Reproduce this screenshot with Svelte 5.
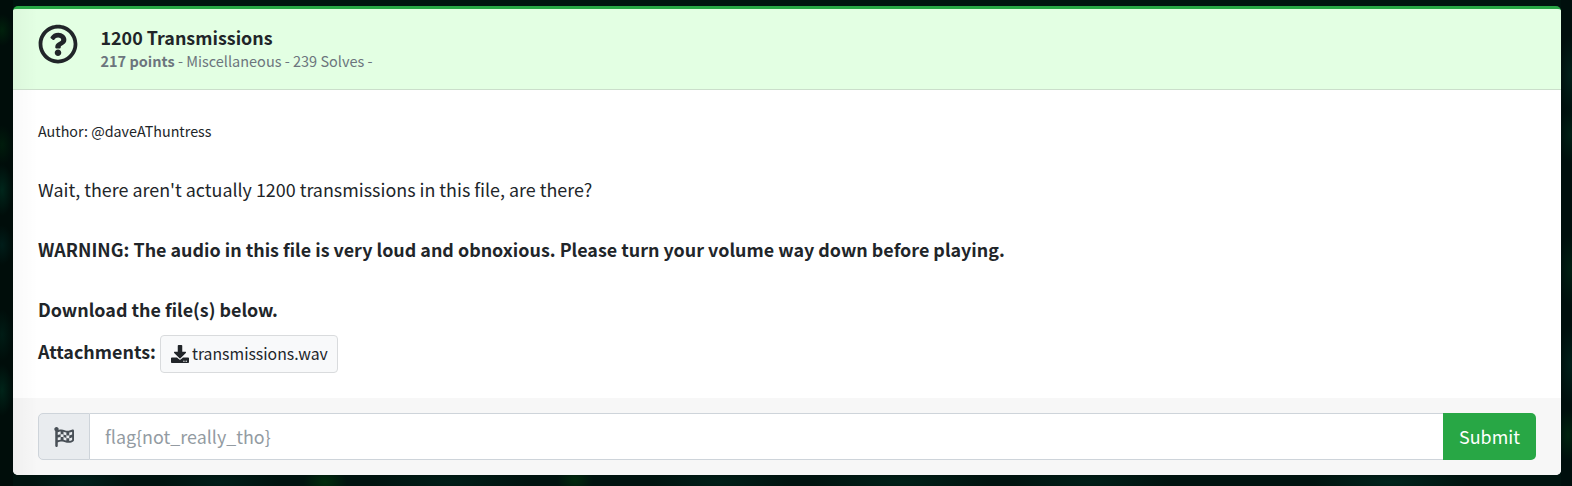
<script>
  const title = '1200 Transmissions';
  const file = 'transmissions.wav';
</script>

<main>
  <article class="card">
    <header>
      <svg class="question" viewBox="0 0 512 512" aria-hidden="true"><path d="M256 8C119.043 8 8 119.083 8 256c0 136.997 111.043 248 248 248s248-111.003 248-248C504 119.083 392.957 8 256 8zm0 448c-110.532 0-200-89.431-200-200 0-110.495 89.472-200 200-200 110.491 0 200 89.471 200 200 0 110.53-89.431 200-200 200zm107.244-255.2c0 67.052-72.421 68.084-72.421 92.863V300c0 6.627-5.373 12-12 12h-45.647c-6.627 0-12-5.373-12-12v-8.659c0-35.745 27.1-50.034 47.579-61.516 17.561-9.845 28.324-16.541 28.324-29.579 0-17.246-21.999-28.693-39.784-28.693-23.189 0-33.894 10.977-48.942 29.969-4.057 5.12-11.46 6.071-16.666 2.124l-27.824-21.098c-5.107-3.872-6.251-11.066-2.644-16.363C184.846 131.491 214.94 112 261.794 112c49.071 0 101.45 38.304 101.45 88.8zM298 368c0 23.159-18.841 42-42 42s-42-18.841-42-42 18.841-42 42-42 42 18.841 42 42z" /></svg>
      <div class="heading">
        <h1><span>{title}</span></h1>
        <p><span><b>217 points</b> - Miscellaneous - 239 Solves -</span></p>
      </div>
    </header>
    <section class="body">
      <p class="author"><span>Author: @daveAThuntress</span></p>
      <p><span>Wait, there aren't actually 1200 transmissions in this file, are there?</span></p>
      <p><b>WARNING: The audio in this file is very loud and obnoxious. Please turn your volume way down before playing.</b></p>
      <p class="download"><b>Download the file(s) below.</b></p>
      <div class="files">
        <b>Attachments:</b>
        <button class="file">
          <svg viewBox="0 0 512 512" aria-hidden="true"><path d="M216 0h80c13.3 0 24 10.7 24 24v168h87.7c17.8 0 26.7 21.5 14.1 34.1L269.7 378.3c-7.5 7.5-19.8 7.5-27.3 0L90.1 226.1c-12.6-12.6-3.7-34.1 14.1-34.1H192V24c0-13.3 10.7-24 24-24zm296 376v112c0 13.3-10.7 24-24 24H24c-13.3 0-24-10.7-24-24V376c0-13.3 10.7-24 24-24h146.7l49 49c20.1 20.1 52.5 20.1 72.6 0l49-49H488c13.3 0 24 10.7 24 24zm-124 88c0-11-9-20-20-20s-20 9-20 20 9 20 20 20 20-9 20-20zm64 0c0-11-9-20-20-20s-20 9-20 20 9 20 20 20 20-9 20-20z" /></svg>
          <span>{file}</span>
        </button>
      </div>
    </section>
    <footer>
      <div class="flag">
        <svg viewBox="0 0 512 512" aria-hidden="true"><path d="M243.2 189.9V258c26.1 5.9 49.3 15.6 73.6 22.3v-68.2c-26-5.8-49.4-15.5-73.6-22.2zm223.3-123c-34.3 15.9-76.5 31.9-117 31.9C296 98.8 251.7 64 184.3 64c-25 0-47.3 4.4-68 12 2.8-7.3 4.1-15.2 3.6-23.6C118.1 24 94.8 1.2 66.3 0 34.3-1.3 8 24.3 8 56c0 19 9.5 35.8 24 45.9V488c0 13.3 10.7 24 24 24h16c13.3 0 24-10.7 24-24v-94.4c28.3-12.1 63.6-22.1 114.4-22.1 53.6 0 97.8 34.8 165.2 34.8 48.2 0 86.7-16.3 122.5-40.9 8.7-6 13.8-15.8 13.8-26.4V95.9c.1-23.3-24.2-38.8-45.4-29zM169.6 325.5c-25.8 2.7-50 8.2-73.6 16.6v-70.5c26.2-9.3 47.5-15 73.6-17.4v71.3zM464 191c-23.6 9.8-46.3 19.5-73.6 23.9V286c24.8-3.4 51.4-11.8 73.6-26v70.5c-25.1 16.1-48.5 24.7-73.6 27.1V286c-27 3.7-47.9 1.5-73.6-5.6v67.4c-23.9-7.4-47.3-16.7-73.6-21.3V258c-19.7-4.4-40.8-6.8-73.6-3.8v-70c-22.4 3.1-44.6 10.2-73.6 20.9v-70.5c33.2-12.2 50.1-19.8 73.6-22v71.6c27-3.7 48.4-1.3 73.6 5.7v-67.4c23.7 7.4 47.2 16.7 73.6 21.3v68.4c23.7 5.3 47.6 6.9 73.6 2.7V143c27-4.8 52.3-13.6 73.6-22.5z" /></svg>
      </div>
      <input type="text" placeholder={'flag{not_really_tho}'} aria-label="Flag" />
      <button class="submit">Submit</button>
    </footer>
  </article>
</main>

<style>
  :global(body) { margin: 0; background: #000f0c; }
  * { box-sizing: border-box; }
  main {
    height: 486px;
    padding: 6px 11px 11px 13px;
    overflow: hidden;
    color: #212529;
    font: 17.9px/30px "Noto Sans CJK JP", "Noto Sans CJK SC", sans-serif;
    background:
      radial-gradient(ellipse 11px 16px at 2px 30px, #00210c, transparent),
      radial-gradient(ellipse 11px 20px at 2px 145px, #001c0c, transparent),
      radial-gradient(ellipse 11px 26px at 2px 190px, #00261b, transparent),
      radial-gradient(ellipse 11px 20px at 2px 245px, #001d19, transparent),
      radial-gradient(ellipse 11px 26px at 2px 335px, #001c15, transparent),
      radial-gradient(ellipse 11px 26px at 2px 390px, #002419, transparent),
      radial-gradient(ellipse 22px 14px at 325px 482px, #002c0c, transparent),
      radial-gradient(ellipse 18px 14px at 575px 480px, #00280c, transparent),
      radial-gradient(ellipse 50px 12px at 80px 482px, #001f1b, transparent),
      radial-gradient(ellipse 60px 12px at 220px 482px, #001d18, transparent),
      radial-gradient(ellipse 80px 12px at 450px 482px, #001e18, transparent),
      radial-gradient(ellipse 70px 12px at 720px 482px, #001f18, transparent),
      radial-gradient(ellipse 90px 12px at 900px 482px, #002118, transparent),
      radial-gradient(ellipse 80px 12px at 1090px 482px, #001f18, transparent),
      radial-gradient(ellipse 80px 12px at 1390px 482px, #00241c, transparent),
      radial-gradient(ellipse 11px 40px at 1570px 75px, #002019, transparent),
      radial-gradient(ellipse 11px 28px at 1570px 135px, #002015, transparent),
      radial-gradient(ellipse 11px 36px at 1570px 270px, #001f12, transparent),
      radial-gradient(ellipse 11px 40px at 1570px 365px, #001f19, transparent),
      radial-gradient(ellipse 11px 26px at 1568px 435px, #00240f, transparent),
      linear-gradient(90deg, #000d0a 0 13px, #00130f 13px 1561px, #000f0d 1561px);
  }
  .card {
    display: flex;
    flex-direction: column;
    height: 469px;
    overflow: hidden;
    border-top: 3px solid #28a745;
    border-radius: 5px;
    background: linear-gradient(90deg, rgba(0, 0, 0, .025), transparent 25px), #fff;
  }
  header {
    display: flex;
    gap: 22.5px;
    height: 81px;
    padding: 15px 25px 0;
    border-bottom: 1px solid #cbdecb;
    background: linear-gradient(90deg, rgba(0, 0, 0, .03), transparent 25px), #e3ffe3;
  }
  svg { display: block; fill: currentColor; flex: none; }
  .question { width: 40px; height: 40px; }
  h1, p { margin: 0; font-weight: 400; white-space: nowrap; }
  h1 { height: 24px; font-size: 17.9px; line-height: 26px; font-weight: 700; }
  header p { font-size: 14.5px; line-height: 25px; color: #6c757d; }
  b { font-weight: 700; }
  .body { height: 308px; padding: 26px 25px 0; }
  .body p { height: 60px; }
  .body .author { height: 58px; font-size: 14.3px; }
  .body .download { height: 39px; }
  .files { display: flex; gap: 4px; line-height: 36px; white-space: nowrap; }
  button { border: 0; font: inherit; }
  .file {
    display: flex;
    align-items: center;
    gap: 3px;
    width: 178px;
    height: 38px;
    padding: 0 10px;
    margin-top: 2px;
    border: 1px solid #d9dbdd;
    border-radius: 4px;
    background: #f8f9fa;
    color: #212529;
    font-size: 15.8px;
    line-height: 36px;
  }
  .file svg { width: 18px; height: 18px; }
  footer {
    display: flex;
    height: 77px;
    padding: 15px 25px 15px;
    background: linear-gradient(90deg, rgba(0, 0, 0, .03), transparent 25px), #f7f7f7;
  }
  .flag {
    display: grid;
    place-items: center;
    width: 52px;
    height: 47px;
    border: 1px solid #ced4da;
    border-radius: 5px 0 0 5px;
    background: #e9ecef;
    color: #495057;
  }
  .flag svg { width: 20px; height: 20px; }
  input {
    flex: 1;
    min-width: 0;
    height: 47px;
    padding: 0 15px 2px;
    border: 1px solid #ced4da;
    border-width: 1px 0 1px 0;
    border-radius: 0;
    background: #fff;
    font: inherit;
    outline: 0;
  }
  .flag + input { margin-left: 0; }
  input::placeholder { color: #939ba2; opacity: 1; }
  .submit {
    width: 93px;
    height: 47px;
    padding: 0 0 2px;
    border-radius: 0 5px 5px 0;
    background: #28a745;
    color: #fff;
  }
</style>
